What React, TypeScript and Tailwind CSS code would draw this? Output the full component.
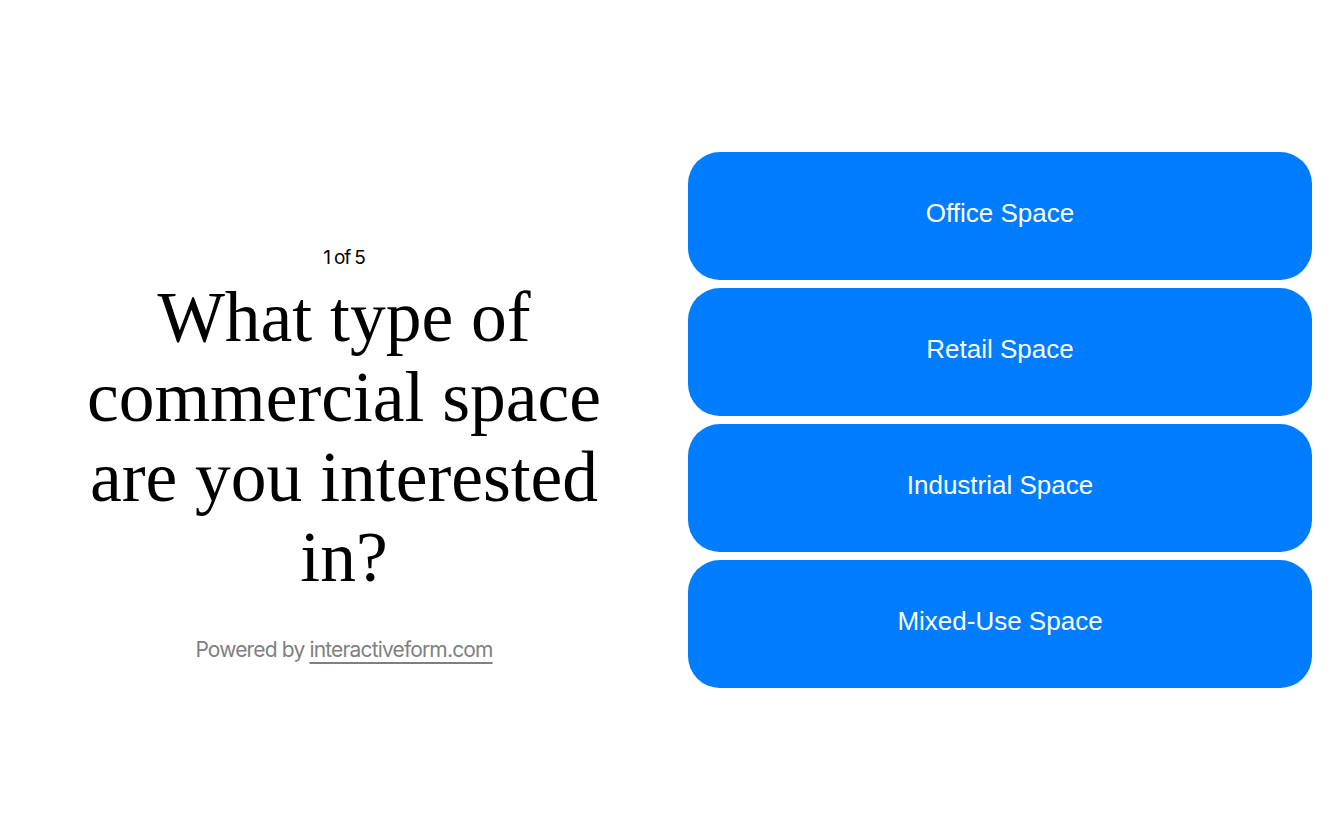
import { type FC } from "react";

const options = ["Office Space", "Retail Space", "Industrial Space", "Mixed-Use Space"];

const OptionButton: FC<{ label: string }> = ({ label }) => (
    <button className="flex h-32 w-full items-center justify-center rounded-[32px] bg-[#007cff] pb-[6px] text-[26px] text-white font-['Liberation_Sans',Arial,sans-serif]">
        {label}
    </button>
);

export default function App() {
    return (
        <div className="flex h-[840px] w-full bg-white">
            <div className="flex flex-1 flex-col items-center justify-center pt-[69px]">
                <p className="text-[19px] tracking-[-0.06em] text-black font-['Inter',sans-serif]">1 of 5</p>
                <h1 className="mt-[5px] w-[560px] text-center text-[71.5px] leading-[80px] text-black font-['Liberation_Serif','Times_New_Roman',serif]">
                    What type of commercial space are you interested in?
                </h1>
                <p className="mt-[37px] text-[21px] tracking-[-0.04em] text-[#808080] font-['Inter',sans-serif]">
                    Powered by{" "}
                    <a className="underline decoration-2 underline-offset-[5px]">interactiveform.com</a>
                </p>
            </div>
            <div className="flex w-[656px] flex-col justify-center gap-2 pr-8">
                {options.map((o) => (
                    <OptionButton key={o} label={o} />
                ))}
            </div>
        </div>
    );
}
